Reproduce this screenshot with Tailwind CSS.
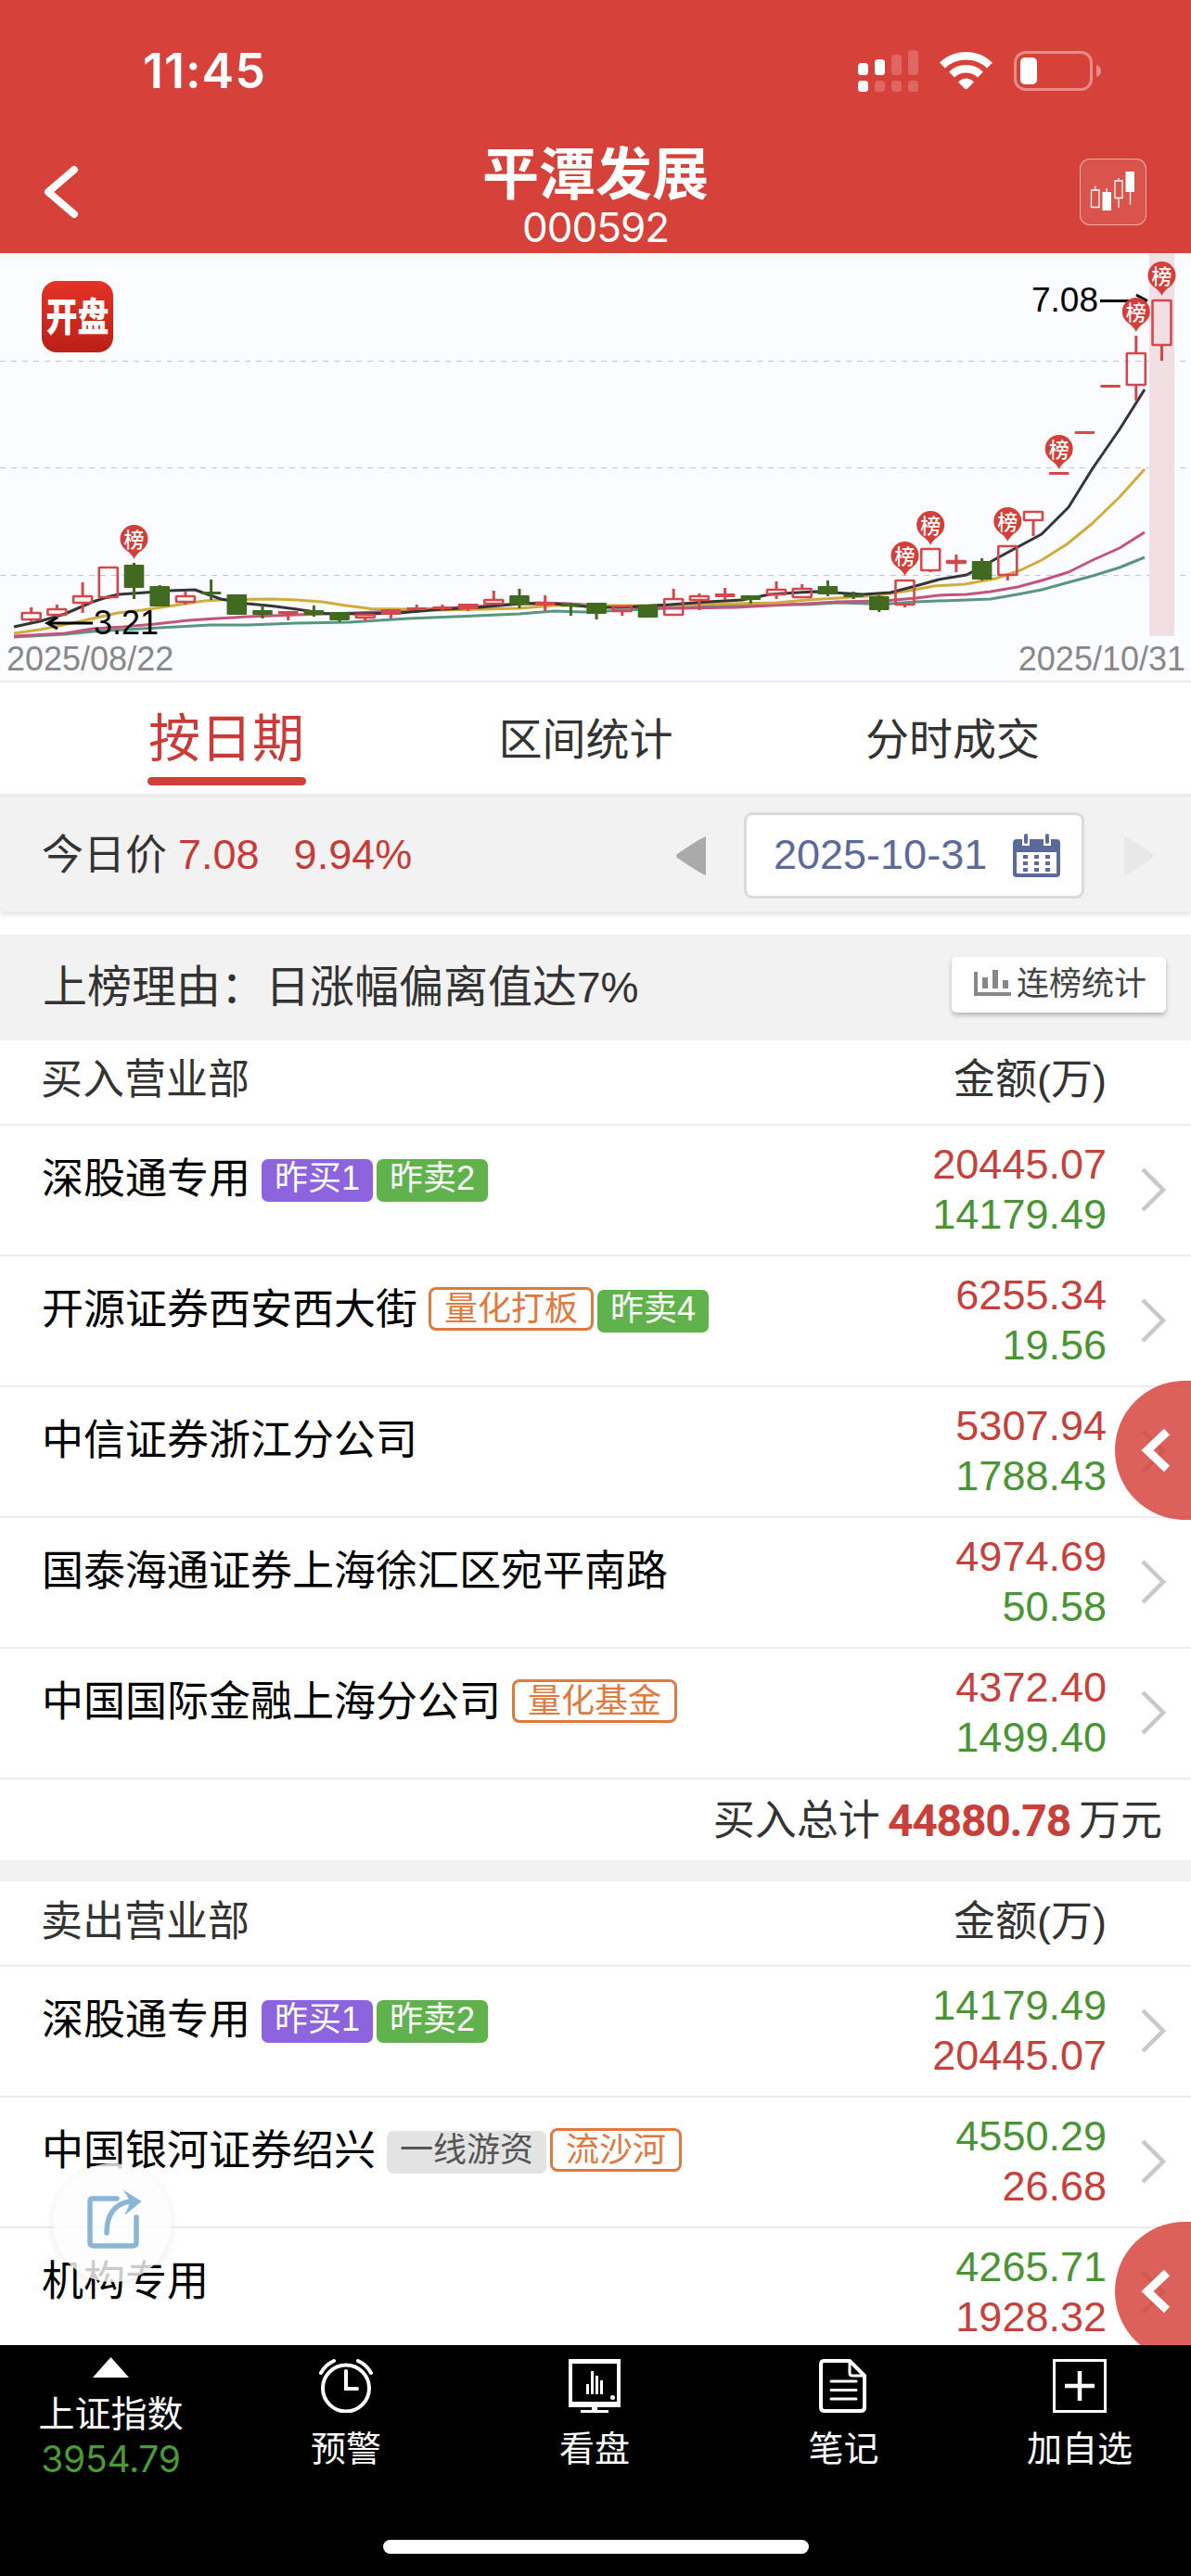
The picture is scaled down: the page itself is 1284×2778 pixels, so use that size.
<!DOCTYPE html>
<html lang="zh-CN">
<head>
  <meta charset="utf-8" />
  <meta name="viewport" content="width=1284" />
  <title>平潭发展 000592</title>
  <script src="https://cdn.jsdelivr.net/npm/@tailwindcss/browser@4"></script>
</head>
<body class="bg-white">
<div class="relative w-[1284px] h-[2778px] overflow-hidden flex flex-col bg-white
            font-['Liberation_Sans','Noto_Sans_CJK_SC',sans-serif] leading-none text-[#333] whitespace-nowrap">

  <!-- HEADER -->
  <header class="h-[273px] shrink-0 bg-[#d6413a] text-white flex flex-col">
    <div class="h-[151px] pt-[3px] pl-[154px] pr-[97px] flex items-center justify-between">
      <span class="font-['Inter',sans-serif] font-semibold text-[52px] tracking-[1px]">11:45</span>
      <svg class="w-[262px] h-[46px]" viewBox="925 53 262 46" fill="#fff">
        <rect x="925" y="67" width="11" height="13" rx="3.5"/>
        <rect x="943" y="63" width="11" height="17" rx="3.5"/>
        <rect x="961" y="58" width="11" height="22" rx="3.5" opacity=".2"/>
        <rect x="979" y="53" width="11" height="27" rx="3.5" opacity=".2"/>
        <rect x="925" y="86" width="11" height="12" rx="3.5"/>
        <rect x="943" y="86" width="11" height="12" rx="3.5" opacity=".2"/>
        <rect x="961" y="86" width="11" height="12" rx="3.5" opacity=".2"/>
        <rect x="979" y="86" width="11" height="12" rx="3.5" opacity=".2"/>
        <g fill="none" stroke="#fff" stroke-width="8.5">
          <path d="M1016 69.5a37 37 0 0 1 51 0"/>
          <path d="M1026 79.500a22.500 22.500 0 0 1 31 0"/>
        </g>
        <path d="M1033 87.500q8.500-8 17 0l-7 7q-1.500 1.500-3 0z"/>
        <rect x="1094.500" y="55.500" width="82" height="40" rx="11" fill="none" stroke="#fff" stroke-width="3" opacity=".4"/>
        <rect x="1100" y="61" width="18" height="29" rx="5"/>
        <path d="M1182 69q5 1.500 5 6.500t-5 6.500z" opacity=".4"/>
      </svg>
    </div>
    <div class="h-[122px] px-[48px] grid grid-cols-[200px_1fr_200px]">
      <svg class="w-[40px] h-[58px] mt-[27px]" viewBox="0 0 40 58" fill="none" stroke="#fff" stroke-width="8" stroke-linecap="round" stroke-linejoin="round">
        <path d="M32 5 4 29 32 53"/>
      </svg>
      <div class="flex flex-col items-center">
        <h1 class="text-[61px] font-bold mt-[8px]">平潭发展</h1>
        <span class="font-['Inter',sans-serif] text-[44px] tracking-[-1px] mt-[3px]">000592</span>
      </div>
      <div class="justify-self-end size-[72px] mt-[20px] rounded-[11px] border-[1.5px] border-white/50 bg-white/10">
        <svg class="size-[69px]" viewBox="1165.500 172.500 69 69" fill="#fff">
          <g fill="none" stroke="#fff" stroke-width="1.300">
            <path d="M1181.300 201v4.500M1193.500 203.500v4M1206.500 192.500v3M1206.500 214v10.500M1219 207v14"/>
            <path d="M1177 205.500h8.500v18.500h-8.500zM1202.500 195.500h8v18.500h-8z"/>
          </g>
          <rect x="1189" y="207.500" width="9.500" height="20"/>
          <rect x="1214" y="185.500" width="9.500" height="22"/>
        </svg>
      </div>
    </div>
  </header>

  <!-- K-LINE CHART -->
  <section class="relative h-[463px] shrink-0 bg-[#fbfcff] border-b-2 border-[#ececef]">
    <svg id="chart" class="block w-[1284px] h-[461px]" viewBox="0 273 1284 461"></svg>
    <div class="absolute left-[45px] top-[30px] size-[77px] rounded-[16px] bg-linear-to-b from-[#e63327] to-[#b92018]
                flex items-center justify-center text-white text-[34px] font-black">
      <span class="scale-y-[1.25]">开盘</span>
    </div>
    <div class="absolute inset-x-0 bottom-[5px] pl-[7px] pr-[6px] flex justify-between text-[36px] text-[#888]">
      <span>2025/08/22</span><span>2025/10/31</span>
    </div>
  </section>

  <!-- TABS -->
  <nav class="h-[120px] shrink-0 flex text-[47px] text-[#333]">
    <div class="w-[488px] pt-[33px] flex flex-col items-center text-[56px] text-[#c93b36]">
      按日期
      <i class="mt-[13px] w-[171px] h-[9px] rounded-full bg-[#d0403b]"></i>
    </div>
    <div class="w-[287px] pt-[38px] text-center">区间统计</div>
    <div class="w-[509px] pt-[38px] pl-[158px]">分时成交</div>
  </nav>

  <!-- DATE FILTER -->
  <section class="relative z-10 h-[127px] shrink-0 bg-[#f2f2f2] border-t-4 border-[#ececec] shadow-[0_3px_6px_rgba(0,0,0,.12)]
                  pl-[45px] pr-[40px] flex items-center text-[45px]">
    <span class="pt-px">今日价</span>
    <span class="text-[#c53c37] ml-[12px]">7.08</span>
    <span class="text-[#c53c37] ml-[37px]">9.94%</span>
    <svg class="w-[32px] h-[42px] ml-auto mt-[2px]" viewBox="0 0 32 42"><path d="M32 0v42Q26 40 1 23q-2-2 0-4Q26 2 32 0z" fill="#aaa"/></svg>
    <div class="ml-[41px] mt-[2px] w-[367px] h-[93px] rounded-[9px] border-[3px] border-[#dadada] bg-white
                pl-[29px] pr-[23px] flex items-center justify-between text-[#5b6a9a]">
      <span class="-mt-[3px]">2025-10-31</span>
      <svg class="w-[51px] h-[48px]" viewBox="0 0 51 48" fill="#5b6a9a">
        <path fill-rule="evenodd" d="M4 6h6v7h8V6h15v7h8V6h6q4 0 4 4v33q0 4-4 4H4q-4 0-4-4V10Q0 6 4 6zM4 20v23h43V20z"/>
        <rect x="12" y="0" width="4" height="11" rx="2"/><rect x="35" y="0" width="4" height="11" rx="2"/>
        <path d="M11 23h5v4h-5zM23 23h5v4h-5zM35 23h5v4h-5zM11 30h5v4h-5zM23 30h5v4h-5zM35 30h5v4h-5zM11 37h5v4h-5zM23 37h5v4h-5zM35 37h5v4h-5z"/>
      </svg>
    </div>
    <svg class="w-[32px] h-[42px] ml-[43px] mt-[2px]" viewBox="0 0 32 42"><path d="M0 0v42Q6 40 31 23q2-2 0-4Q6 2 0 0z" fill="#e8e8e8"/></svg>
  </section>

  <!-- REASON -->
  <section class="mt-[25px] h-[114px] shrink-0 bg-[#f2f2f2] pl-[46px] pr-[27px] flex items-center justify-between">
    <span class="text-[48px]">上榜理由：日涨幅偏离值达<span class="text-[46px]">7%</span></span>
    <div class="w-[231px] h-[60px] -mt-[7px] rounded-[5px] bg-white shadow-[0_3px_5px_rgba(0,0,0,.25)] flex items-center pl-[24px] pb-[3px] text-[35px] text-[#444]">
      <svg class="w-[40px] h-[28px] mr-[6px]" viewBox="0 0 40 28" fill="#888">
        <path d="M0 2h4v22h36v4H0zM9 8h6v12H9zM20 0h6v20h-6zM31 11h6v9h-6z"/>
      </svg>
      连榜统计
    </div>
  </section>

  <!-- BUY -->
  <div class="h-[90px] shrink-0 pl-[44px] pr-[91px] pb-[5px] flex items-center justify-between text-[45px]">
    <span>买入营业部</span><span>金额(万)</span>
  </div>
  <div id="buy" class="shrink-0"></div>
  <div class="h-[89px] shrink-0 border-t-2 border-[#ececec] pt-[2px] pr-[31px] flex items-center justify-end text-[45px]">
    买入总计
    <b class="font-['Roboto',sans-serif] text-[48px] tracking-[-1.2px] text-[#c9403b] ml-[8px] mr-[9px]">44880.78</b>
    万元
  </div>
  <div class="h-[23px] shrink-0 bg-[#f2f2f2]"></div>

  <!-- SELL -->
  <div class="h-[90px] shrink-0 pl-[44px] pr-[91px] pb-[4px] flex items-center justify-between text-[45px]">
    <span>卖出营业部</span><span>金额(万)</span>
  </div>
  <div id="sell" class="shrink-0"></div>

  <!-- floating handles -->
  <div class="absolute right-0 top-[1489px] w-[82px] h-[150px] rounded-l-[75px] bg-[#d6413a]/83">
    <svg class="absolute left-[28px] top-[51px] w-[32px] h-[48px]" viewBox="0 0 32 48" fill="none" stroke="#fff" stroke-width="9"><path d="M28 4 7 24l21 20"/></svg>
  </div>
  <div class="absolute right-0 top-[2396px] w-[82px] h-[150px] rounded-l-[75px] bg-[#d6413a]/83">
    <svg class="absolute left-[28px] top-[51px] w-[32px] h-[48px]" viewBox="0 0 32 48" fill="none" stroke="#fff" stroke-width="9"><path d="M28 4 7 24l21 20"/></svg>
  </div>
  <div class="absolute left-[57px] top-[2333px] size-[128px] rounded-full bg-[#fcfcfc]/80 shadow-[0_2px_10px_rgba(0,0,0,.09)]">
    <svg class="absolute left-[35px] top-[28px] w-[62px] h-[66px]" viewBox="92 2361 62 66" fill="none" stroke="#8bb5d4" stroke-width="5.5" stroke-linecap="round" stroke-linejoin="round">
      <path d="M126 2371H100q-3 0-3 3v44q0 4 4 4h42q4 0 4-4v-27"/>
      <path d="M115 2408c0-20 9-32 26-34"/>
      <path d="M134 2363l18 11-17 14q5-9 5-13t-6-12z" fill="#8bb5d4" stroke-width="1"/>
    </svg>
  </div>

  <!-- BOTTOM BAR -->
  <footer class="absolute inset-x-0 top-[2529px] h-[249px] bg-black text-white text-[39px]">
    <div class="grid grid-cols-[239px_268px_268px_269px_240px] justify-items-center">
      <div class="flex flex-col items-center pt-[13px]">
        <svg class="w-[39px] h-[22px]" viewBox="0 0 39 22"><path d="M19.500 0 39 22H0z" fill="#fff"/></svg>
        <span class="mt-[20px]">上证指数</span>
        <span class="mt-[9px] font-['Inter',sans-serif] text-[39px] tracking-[-0.3px] text-[#4a9a35]">3954.79</span>
      </div>
      <div class="flex flex-col items-center pt-[15px]">
        <svg class="size-[58px]" viewBox="0 0 58 58" fill="none" stroke="#fff" stroke-width="4" stroke-linecap="round">
          <circle cx="29" cy="31.500" r="25"/>
          <path d="M29 13v19h12"/>
          <path d="M2 15Q7 6 16 2M42 2q9 4 14 13"/>
        </svg>
        <span class="mt-[20px] text-[38px]">预警</span>
      </div>
      <div class="flex flex-col items-center pt-[15px]">
        <svg class="size-[58px]" viewBox="0 0 58 58" fill="#fff">
          <path fill-rule="evenodd" d="M1 0h56v52H32v3h12v3H14v-3h12v-3H1zM5 5v41h48V5z"/>
          <path d="M20 27h3v11h-3zM25 13h3v25h-3zM30 18h3v20h-3zM35 23h3v15h-3z"/>
          <circle cx="48.500" cy="41.500" r="2.500"/>
        </svg>
        <span class="mt-[20px] text-[38px]">看盘</span>
      </div>
      <div class="flex flex-col items-center pt-[15px]">
        <svg class="size-[58px]" viewBox="0 0 58 58" fill="none" stroke="#fff" stroke-width="4" stroke-linecap="round" stroke-linejoin="round">
          <path d="M8 2h28l16 16v34q0 4-4 4H9q-4 0-4-4V6q0-4 3-4z"/>
          <path d="M36 3v12q0 3 3 3h12" stroke-width="3"/>
          <path d="M16 24h27M16 33.500h27M16 43h27" stroke-width="3"/>
        </svg>
        <span class="mt-[20px] text-[38px]">笔记</span>
      </div>
      <div class="flex flex-col items-center pt-[15px]">
        <svg class="size-[58px]" viewBox="0 0 58 58" fill="none" stroke="#fff" stroke-width="3">
          <path d="M1.500 1.500h55v55h-55z"/>
          <path d="M29 13v32M13 29h32" stroke-width="4.500"/>
        </svg>
        <span class="mt-[20px] text-[38px]">加自选</span>
      </div>
    </div>
    <div class="absolute left-[413px] top-[210px] w-[459px] h-[15px] rounded-full bg-white"></div>
  </footer>
</div>

<script>
  /* ---------- department rows ---------- */
  const tagClass = {
    buy:    'mt-[5px] h-[46px] px-[14px] pb-[4px] rounded-[7px] bg-[#8d63de] text-white',
    sell:   'mt-[5px] h-[46px] px-[14px] pb-[4px] rounded-[7px] bg-[#60b24c] text-white',
    style:  'mt-[2px] h-[47px] px-[14px] rounded-[8px] border-[3px] border-[#dd7a40] text-[#dd7a40]',
    trader: 'mt-[5px] h-[46px] px-[14px] pb-[4px] rounded-[7px] bg-[#e3e3e3] text-[#555]',
  };
  const red = 'text-[#c5413c]', green = 'text-[#4a9435]';

  const row = ([name, tags, a, b], ca, cb) => /*html*/`
    <div class="h-[141px] border-t-2 border-[#ececec] pl-[45px] pr-[26px] flex">
      <div class="pt-[31px] flex-1 flex items-start gap-[4px]">
        <span class="h-[52px] flex items-center text-[45px] text-black mr-[8px]">${name}</span>
        ${tags.map(([kind, label]) => `<span class="flex items-center text-[36px] ${tagClass[kind]}">${label}</span>`).join('')}
      </div>
      <div class="pt-[15px] text-right text-[45px] leading-[54px]">
        <div class="${ca}">${a}</div>
        <div class="${cb}">${b}</div>
      </div>
      <svg class="ml-[37px] mt-[45px] w-[28px] h-[48px]" viewBox="0 0 28 48" fill="none" stroke="#c8c8c8" stroke-width="4.500"><path d="M2 2l22 22L2 46"/></svg>
    </div>`;

  const buyRows = [
    ['深股通专用', [['buy', '昨买1'], ['sell', '昨卖2']], '20445.07', '14179.49'],
    ['开源证券西安西大街', [['style', '量化打板'], ['sell', '昨卖4']], '6255.34', '19.56'],
    ['中信证券浙江分公司', [], '5307.94', '1788.43'],
    ['国泰海通证券上海徐汇区宛平南路', [], '4974.69', '50.58'],
    ['中国国际金融上海分公司', [['style', '量化基金']], '4372.40', '1499.40'],
  ];
  const sellRows = [
    ['深股通专用', [['buy', '昨买1'], ['sell', '昨卖2']], '14179.49', '20445.07'],
    ['中国银河证券绍兴', [['trader', '一线游资'], ['style', '流沙河']], '4550.29', '26.68'],
    ['机构专用', [], '4265.71', '1928.32'],
  ];
  document.getElementById('buy').innerHTML  = buyRows.map(r => row(r, red, green)).join('');
  document.getElementById('sell').innerHTML = sellRows.map(r => row(r, green, red)).join('');

  /* ---------- chart ---------- */
  // [kind, bodyTop, bodyBottom, wickTop, wickBottom]; r = hollow, R = solid red, g = green
  const candles = [
    ['r',660,669,655,671],['r',656,664,652,667],['r',642,651,628,661],['r',611,645,611,646],
    ['g',609,634,607,646],['g',632,654,631,654],['r',642,650,638,652],['g',638,641,625,647],
    ['g',641,663,641,663],['g',658,663,653,667],['R',659,662,659,669],['g',658,663,653,665],
    ['g',660,669,660,671],['r',662,667,662,670],['R',657,663,657,667],['R',655,658,652,658],
    ['R',654,657,652,659],['R',651,657,651,659],['r',646,652,637,652],['g',642,652,635,656],
    ['R',649,653,642,659],['g',651,654,650,664],['g',650,662,650,668],['r',653,660,653,664],
    ['g',652,666,652,666],['r',645,664,635,664],['r',642,648,640,658],['R',640,644,634,647],
    ['g',642,647,642,651],['r',635,642,627,646],['r',634,645,630,645],['g',632,641,626,643],
    ['g',641,644,638,646],['g',643,658,642,660],['r',625,653,625,655],['r',591,616,591,617],
    ['r',604,608,598,617],['g',605,625,602,626],['r',588,621,588,626],['r',551,562,551,578],
    ['R',509,512,509,512],['R',465,468,465,468],['R',415,418,415,418],['r',380,416,362,432],
    ['r',323,373,323,389],
  ];
  const pins = [[4,567],[34,585],[35,552],[38,548],[40,470],[43,322],[44,283]];
  const lines = {
    '#333536': '15,676 43,670 70,662 100,649 117,643.500 128,641 157,639 182,637 210,636 238,646 267,651 293,653.500 320,657 350,661.500 390,662 430,661 477,657 517,655 560,651 597,651 643,655 670,655 723,652 763,649 800,647 830,641 860,639 880,638 930,641 960,639 987,632 1012,625 1042,620 1057,612 1073,603 1123,576 1152,547 1178,505 1207,463 1234,420',
    '#d1ac3a': '15,683 43,679 73,673 100,667 127,661 153,658 187,653 220,648 247,646.500 293,646 320,647 347,649 373,653 400,656.500 440,657 477,658 560,656 597,653 700,653 790,651 837,650 870,647 903,645 947,642 980,637 1007,632 1040,630 1073,624 1100,615 1123,604 1150,587 1177,565 1207,536 1234,506',
    '#c2547f': '15,686 70,683 100,678 133,676 167,673 203,669 233,667 267,665 320,663 383,661 440,658 477,656 530,653 580,650 613,651 663,654 730,656 793,655 870,651 903,649 953,648 987,645 1012,642 1042,641 1068,638 1097,633 1123,626 1152,617 1178,604 1207,591 1234,574',
    '#57977f': '15,687 70,684 100,681 153,678 227,674 267,674 320,672 377,671 440,667 490,665 560,662 597,659 630,660 697,657 763,654 830,652 870,652 903,650 953,651.500 987,649 1042,647 1068,646 1097,641 1123,636 1152,628 1178,621 1207,612 1234,601',
  };
  const cx = i => 33.7 + i * 27.7;

  const drawCandle = ([kind, t, b, wt, wb], i) => {
    const x = cx(i), c = kind === 'g' ? '#3f6a1f' : '#d5474a';
    const wick = `<path d="M${x} ${wt}V${t}M${x} ${b}V${wb}" stroke="${c}" stroke-width="3"/>`;
    return wick + (kind === 'r'
      ? `<rect x="${x - 10}" y="${t + 1}" width="20" height="${b - t - 2}" rx=".5" fill="none" stroke="${c}" stroke-width="2.6"/>`
      : `<rect x="${x - 10.8}" y="${t}" width="21.6" height="${b - t}" rx="1" fill="${c}"/>`);
  };
  const drawPin = ([i, top]) => `
    <path d="M${cx(i)} ${top + 36}q-2-5-9-10a15 15 0 1 1 18 0q-7 5-9 10z" fill="#d33f39"/>
    <text x="${cx(i)}" y="${top + 23}" font-size="22" font-weight="500" fill="#fff" text-anchor="middle">榜</text>`;

  document.getElementById('chart').innerHTML = `
    <g stroke="#c3c3cf" stroke-width="1" stroke-dasharray="6 6">
      <path d="M0 389.500H1280M0 504.500H1280M0 620.500H1280"/>
    </g>
    <rect x="1239" y="273" width="27" height="413" fill="#f2dfe4"/>
    ${Object.entries(lines).reverse().map(([c, p]) =>
      `<polyline points="${p}" fill="none" stroke="${c}" stroke-width="3" stroke-linejoin="round"/>`).join('')}
    ${candles.map(drawCandle).join('')}
    <g fill="none" stroke="#000" stroke-width="3">
      <path d="M52 672H100M62 666L51 672l11 6M1186 324.500H1236"/>
      <path d="M1225 318l12 6.500"/>
    </g>
    <text x="101" y="684" font-size="36" fill="#000">3.21</text>
    <text x="1112" y="336" font-size="37" fill="#000">7.08</text>
    ${pins.map(drawPin).join('')}`;
</script>
</body>
</html>
